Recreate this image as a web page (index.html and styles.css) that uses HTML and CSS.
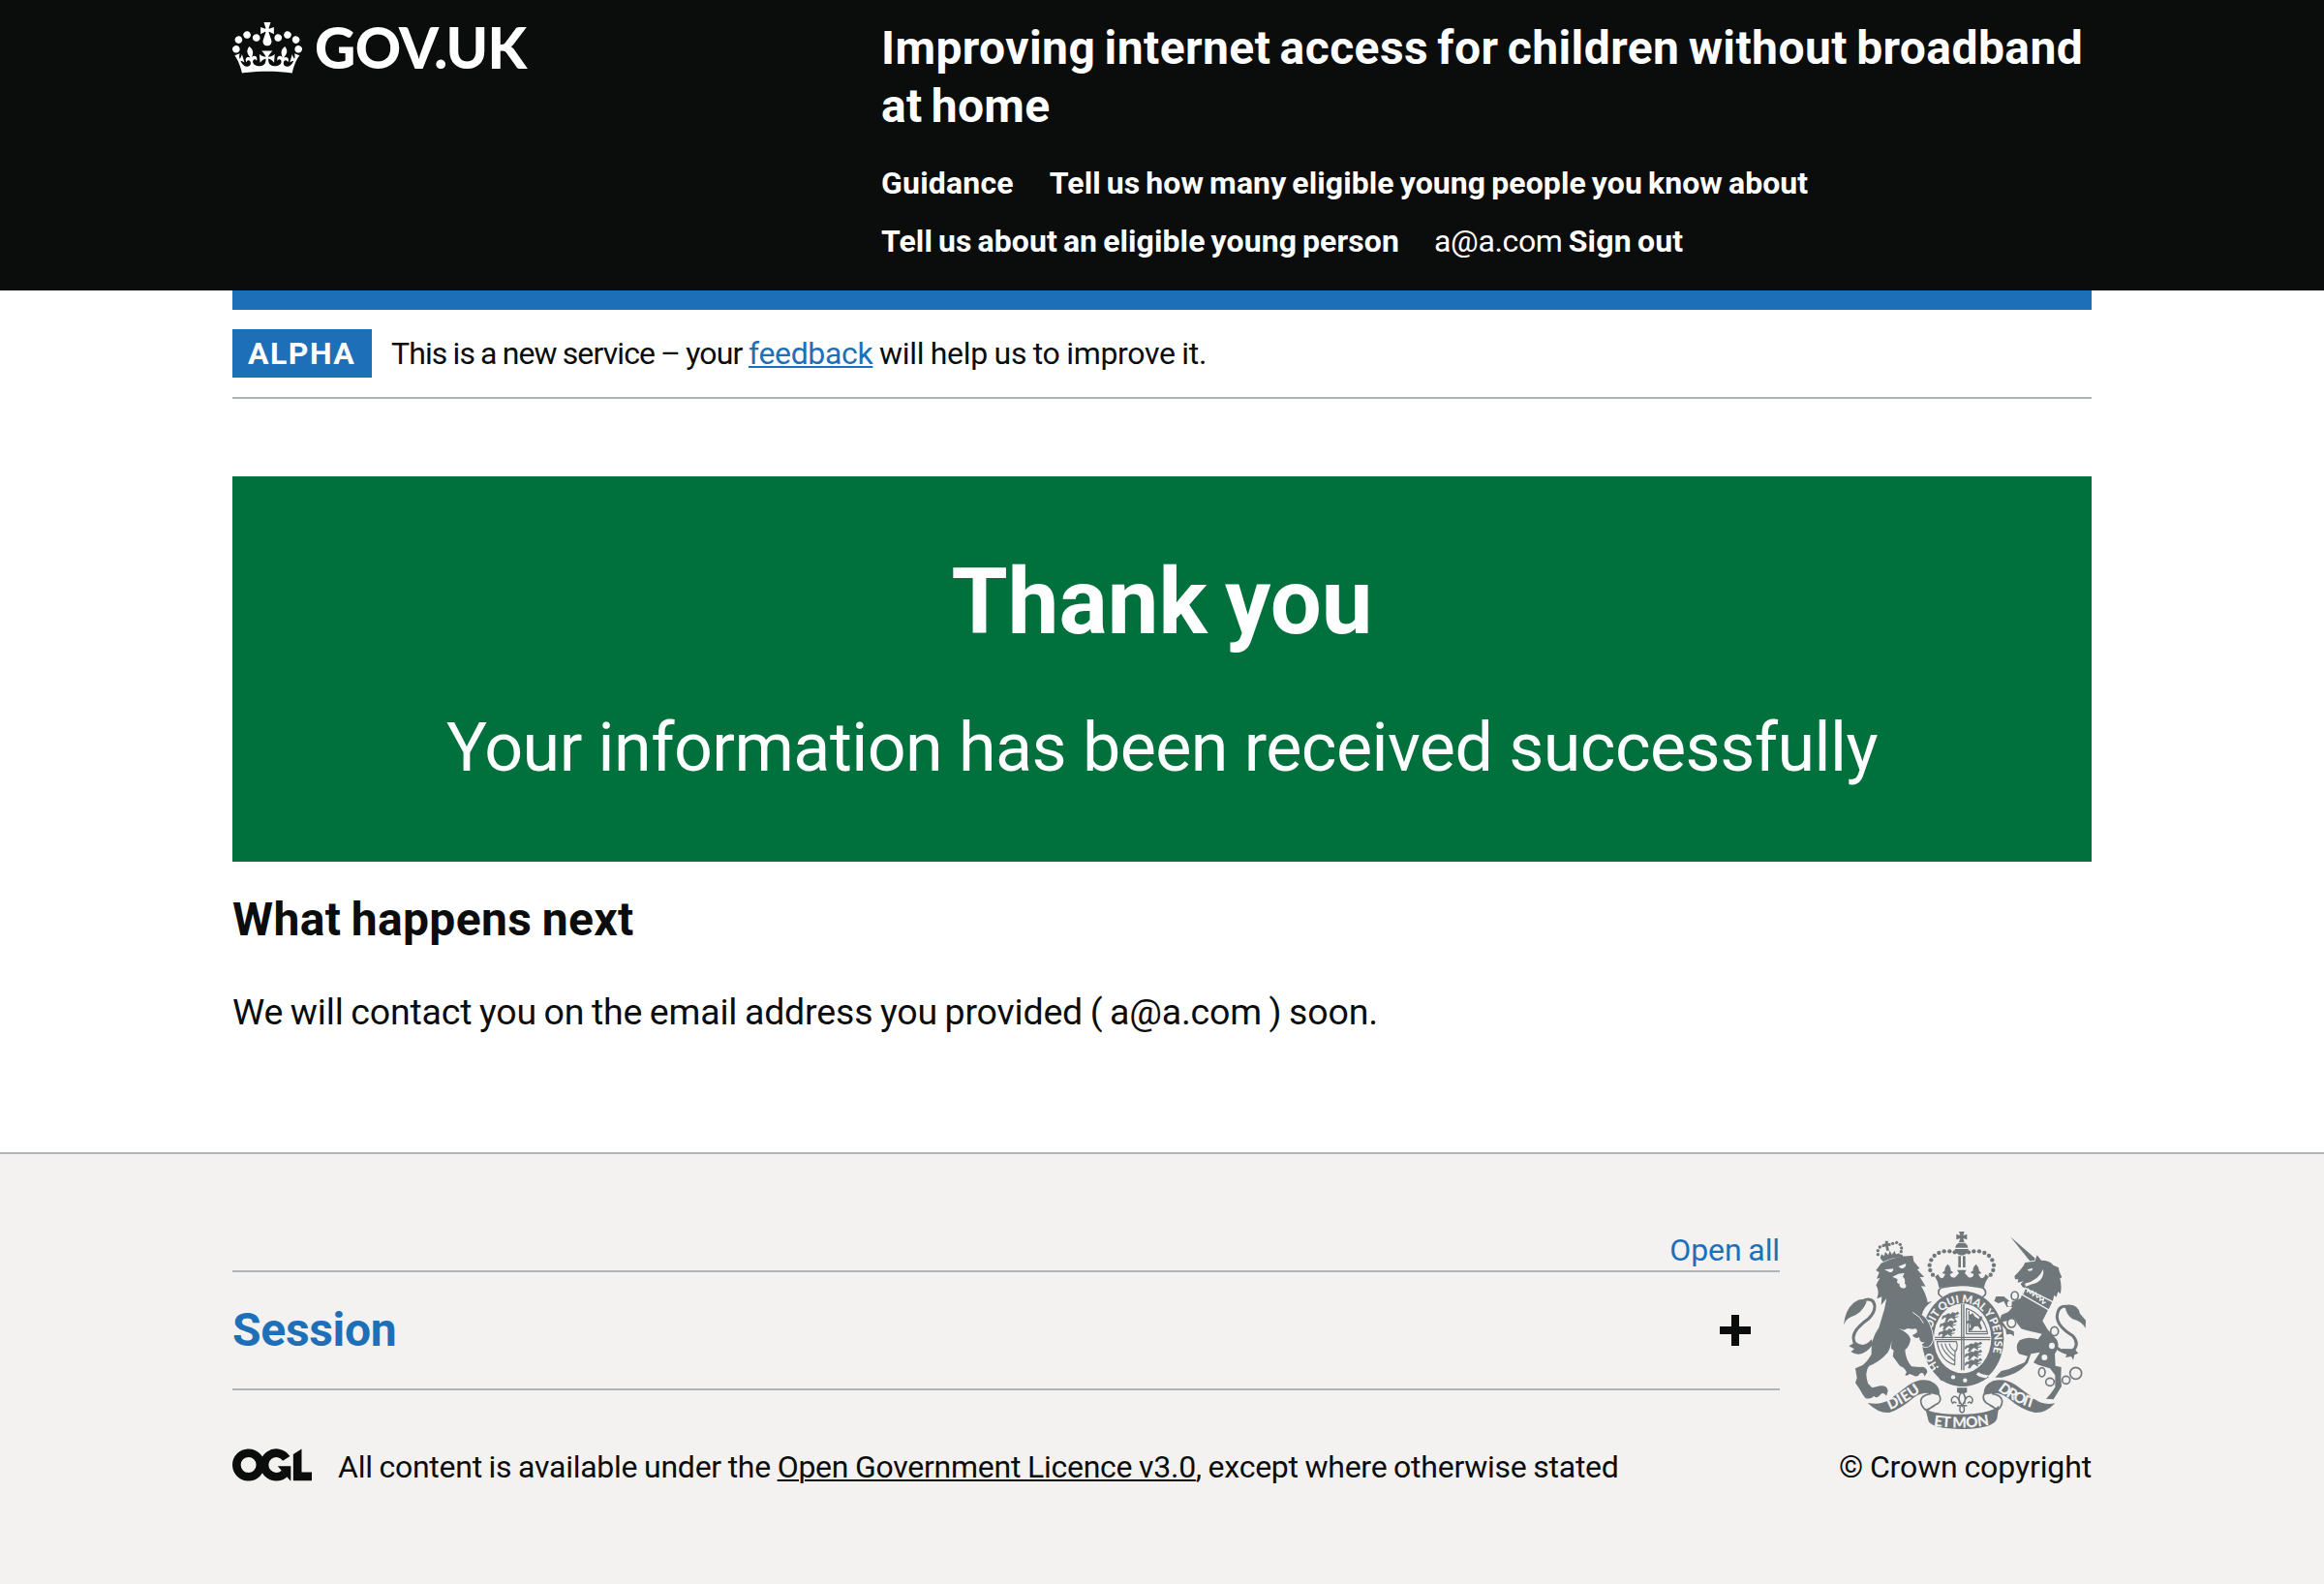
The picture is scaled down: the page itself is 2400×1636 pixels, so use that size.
FILE: index.html
```html
<!DOCTYPE html>
<html lang="en">
<head>
<meta charset="utf-8">
<title>Thank you - GOV.UK</title>
<link rel="stylesheet" href="styles.css">
</head>
<body>
<header class="header">
  <div class="container header-row">
    <a class="logo" href="#">
      <svg class="logo-crown" viewBox="0 0 132 97" aria-hidden="true"><path fill="currentColor" fill-rule="evenodd" d="M25 30.2c3.5 1.5 7.7-.2 9.1-3.7 1.5-3.6-.2-7.8-3.9-9.2-3.6-1.4-7.6.3-9.1 3.9-1.4 3.5.3 7.5 3.9 9zM9 39.5c3.6 1.5 7.8-.2 9.2-3.7 1.5-3.6-.2-7.8-3.9-9.1-3.6-1.5-7.6.2-9.1 3.8-1.4 3.5.3 7.5 3.8 9zM4.4 57.2c3.5 1.5 7.7-.2 9.1-3.8 1.5-3.6-.2-7.7-3.9-9.1-3.5-1.5-7.6.3-9.1 3.8-1.4 3.5.3 7.6 3.9 9.1zm38.3-21.4c3.5 1.5 7.7-.2 9.1-3.8 1.5-3.6-.2-7.7-3.9-9.1-3.6-1.5-7.6.3-9.1 3.8-1.3 3.6.4 7.7 3.9 9.1zm64.4-5.6c-3.6 1.5-7.8-.2-9.1-3.7-1.5-3.6.2-7.8 3.8-9.2 3.6-1.4 7.7.3 9.2 3.9 1.3 3.5-.4 7.5-3.9 9zm15.9 9.3c-3.6 1.5-7.7-.2-9.1-3.7-1.5-3.6.2-7.8 3.7-9.1 3.6-1.5 7.7.2 9.2 3.8 1.5 3.5-.3 7.5-3.8 9zm4.7 17.7c-3.6 1.5-7.8-.2-9.2-3.8-1.5-3.6.2-7.7 3.9-9.1 3.6-1.5 7.7.3 9.2 3.8 1.3 3.5-.4 7.6-3.9 9.1zM89.3 35.8c-3.6 1.5-7.8-.2-9.2-3.8-1.4-3.6.2-7.7 3.9-9.1 3.6-1.5 7.7.3 9.2 3.8 1.4 3.6-.3 7.7-3.9 9.1zM69.7 17.7l8.9 4.7V9.3l-8.9 2.8c-.2-.3-.5-.6-.9-.9L72.4 0H59.6l3.5 11.2c-.3.3-.6.5-.9.9l-8.8-2.8v13.1l8.8-4.7c.3.3.6.7.9.9l-5 15.4v.1c-.2.8-.4 1.6-.4 2.4 0 4.1 3.1 7.5 7 8.1h.2c.3 0 .7.1 1 .1.4 0 .7 0 1-.1h.2c4-.6 7.1-4.1 7.1-8.1 0-.8-.1-1.7-.4-2.4V34l-5.1-15.4c.4-.2.7-.6 1-.9zM66 92.8c16.9 0 32.8 1.1 47.1 3.2 4-16.9 8.9-26.7 14-33.5l-9.6-3.4c1 4.9 1.1 7.2 0 10.2-1.5-1.4-3-4.3-4.2-8.7L108.6 76c2.8-2 5-3.2 7.5-3.3-4.4 9.4-10 11.9-13.6 11.2-4.3-.8-6.3-4.6-5.6-7.9 1-4.7 5.7-5.9 8-.5 4.3-8.7-3-11.4-7.6-8.8 7.1-7.2 7.9-13.5 2.1-21.1-8 6.1-8.1 12.3-4.5 20.8-4.7-5.4-12.1-2.5-9.5 6.2 3.4-5.2 7.9-2 7.2 3.1-.6 4.3-6.4 7.8-13.5 7.2-10.3-.9-10.9-8-11.2-13.8 2.5-.5 7.1 1.8 11 7.3L80.2 60c-4.1 4.4-8 5.3-12.3 5.4 1.4-4.4 8-11.6 8-11.6H55.5s6.4 7.2 7.9 11.6c-4.2-.1-8-1-12.3-5.4l1.4 16.4c3.9-5.5 8.5-7.7 10.9-7.3-.3 5.8-.9 12.8-11.1 13.8-7.2.6-12.9-2.9-13.5-7.2-.7-5 3.8-8.3 7.1-3.1 2.7-8.7-4.6-11.6-9.4-6.2 3.7-8.5 3.6-14.7-4.6-20.8-5.8 7.6-5 13.9 2.2 21.1-4.7-2.6-11.9.1-7.7 8.8 2.3-5.5 7.1-4.2 8.1.5.7 3.3-1.3 7.1-5.7 7.9-3.5.7-9-1.8-13.5-11.2 2.5.1 4.7 1.3 7.5 3.3l-4.7-15.4c-1.2 4.4-2.7 7.2-4.3 8.7-1.1-3-.9-5.3 0-10.2l-9.5 3.4c5 6.9 9.9 16.7 14 33.5 14.8-2.1 30.8-3.2 47.7-3.2z"/></svg>
      <span class="logo-text">GOV.UK</span>
    </a>
    <div class="header-content">
      <a class="service-name" href="#">Improving internet access for children without broadband <span class="service-tail">at home</span></a>
      <nav class="nav">
        <a class="nav-guidance" href="#">Guidance</a>
        <a href="#">Tell us how many eligible young people you know about</a>
        <a href="#">Tell us about an eligible young person</a>
        <span class="account"><span class="email">a@a.com</span> <a class="sign-out" href="#">Sign out</a></span>
      </nav>
    </div>
  </div>
</header>

<div class="container">
  <div class="phase-banner">
    <strong class="tag">ALPHA</strong>
    <span class="phase-text"><span class="phase-lead">This is a new service – your</span> <a class="feedback" href="#">feedback</a> will help us to improve it.</span>
  </div>
  <main class="main">
    <div class="panel">
      <h1 class="panel-title">Thank you</h1>
      <div class="panel-body">Your information has been received successfully</div>
    </div>
    <h2 class="heading">What happens next</h2>
    <p class="body-text">We will contact you on the email address you provided ( a@a.com ) soon.</p>
  </main>
</div>

<footer class="footer">
  <div class="container footer-row">
    <div class="footer-main">
      <button class="open-all" type="button">Open all</button>
      <div class="accordion">
        <h2 class="accordion-title">Session</h2>
        <span class="plus"></span>
      </div>
      <div class="licence">
        <svg class="ogl" viewBox="0 0 484 196" aria-hidden="true">
          <g fill="none" stroke="currentColor" stroke-width="51">
            <circle cx="98" cy="98" r="72.500"/>
            <path d="M329 59A72.500 72.500 0 1 0 318 150"/>
          </g>
          <path fill="currentColor" d="M276 106h80v88h-3l-50-57zM160 72h26v52h-26zM371 33 422 0v143h62v51H371z"/>
        </svg>
        <span class="licence-text">All content is available under the <a href="#">Open Government Licence v3.0</a>, except where otherwise stated</span>
      </div>
    </div>
    <div class="footer-side">
      <svg class="crest" viewBox="60 60 780 630" aria-hidden="true">
        <defs>
          <path id="garter" d="M369 489A99 119 0 1 1 506 494"/>
          <path id="motto-left" d="M215 618Q260 600 318 556"/>
          <path id="motto-right" d="M549 556Q595 598 672 616"/>
          <path id="motto-mid" d="M350 667Q437 681 524 665"/>
          <g id="charge"><path d="M0 6q9-9 17-3l4-6 9 2 2 7-6 3 4 10-5-3-7-4-8 5-5 8-5-1 4-10-6-3-8 6 2-9zM30 1l8-6 4 5-7 3M23 10l8 2 9-3"/></g>
          <g id="pearls"><circle cx="416" cy="130" r="6.500"/><circle cx="400" cy="127" r="6.500"/><circle cx="383" cy="127" r="6.500"/><circle cx="367" cy="132" r="6.500"/><circle cx="353" cy="141" r="6.500"/><circle cx="343" cy="154" r="6.500"/><circle cx="338" cy="170" r="6.500"/><circle cx="340" cy="186" r="6.500"/><circle cx="348" cy="200" r="6.500"/></g>
        </defs>

        <!-- crown -->
        <g class="ink">
          <path d="M429 66h17l-4 12 12-4v17l-12-4 4 12h-17l4-12-12 4V74l12 4zM428 101h19q10 6 10 15h-39q0-9 10-15zM416 120h43q-3 18-21 20-19-2-22-20zM427 142h8v35h-8zM441 142h8v35h-8z"/>
          <use href="#pearls"/><use href="#pearls" transform="matrix(-1 0 0 1 875 0)"/>
          <path d="M354 206l11-8q5 16 15 11l7-11-10-3 8-8q-1-10 9-20 12 9 9 20l9 6-11 5q3 13 16 10l12-13-6-10h29l-5 10 12 13q13 3 16-10l-11-5 9-6q-2-10 9-20 10 10 9 20l8 8-10 3 7 11q10 5 15-11l11 8q-13 15-15 34-67-18-140 0-2-20-12-34z"/>
        </g>
        <path class="line" d="M374 240q-12 8-7 21l10 9M502 240q14 9 8 22l-9 8M374 240q63-16 128 0"/>

        <!-- garter and shield -->
        <ellipse class="ink" cx="441" cy="398" rx="127" ry="148"/>
        <ellipse class="paper" cx="440" cy="397" rx="89" ry="108"/>
        <text class="garter-text"><textPath href="#garter" startOffset="2">HO&emsp;&emsp;SOIT QUI MAL Y PENSE</textPath></text>
        <g class="ink">
          <path d="M435 291h4v205h-4zM442 291h4v205h-4zM354 392h172v4H354zM354 399h172v4H354z"/>
          <g class="charges">
            <use href="#charge" x="387" y="320"/><use href="#charge" x="380" y="345"/><use href="#charge" x="376" y="371"/>
            <use href="#charge" x="458" y="413"/><use href="#charge" x="458" y="438"/><use href="#charge" x="458" y="464"/>
          </g>
          <path d="M460 325l12-6 6 10 12 8 8-10 4 7-8 14 7 17-4 7-9-13-11 1-8 13-11 1 8-15-5-11-10 5 4-12 8 2z"/>
        </g>
        <path class="line thin" d="M452 304v79h66M460 312v64h58M452 304q55 18 66 79M361 407h60q7 18-4 32l-1 40q-45-12-55-72zM374 413q5 28 42 54M386 413q6 24 30 39M399 413q3 14 18 24"/>
        <g class="ink">
          <path d="M357 485q50 50 131 19l34 13q-43 31-91 28-51-5-75-38z"/>
          <path d="M379 480q-20 5-13 19-12 9 1 19 5 15 22 9-15-8-10-20-4-13 10-20z"/>
        </g>
        <path class="paper" d="M489 502q17 11 32 8l-6 9q-16 3-33-10z"/>
        <g class="paper"><circle cx="411" cy="517" r="6.500"/><circle cx="448" cy="527" r="6.500"/></g>

        <!-- lion -->
        <path class="halo ink" d="M172 186 188 164Q235 140 286 141L289 158 307 180 300 184 321 207 308 207 326 236 312 235Q328 262 332 285L346 282Q319 300 314 325 342 342 349 398 343 427 321 423L314 416 324 408Q307 412 306 393 294 401 285 388L299 379Q302 362 285 368L270 366 258 371 243 366Q276 383 279 399 277 421 262 433 264 463 282 484L306 486Q329 482 331 502L322 515Q319 498 307 507 301 520 286 511L276 507Q268 515 262 510L267 502Q260 486 246 482L224 452 227 434 219 428 220 405Q216 435 202 448 182 470 150 483 136 502 147 536L160 550 185 544Q207 542 209 560L204 575Q196 561 186 571 178 585 166 576 154 587 139 582L132 572 118 549 108 535 113 520 108 490 122 484Q139 479 158 446 155 398 181 364L198 307 205 273 188 294 190 268 175 274Q184 250 172 232L184 210 174 212 182 193z"/>
        <g class="ink">
          <path d="M72 356Q76 309 104 286 130 267 143 284 129 320 91 332 79 337 72 356zM88 421 105 430 94 438Q129 462 164 414L158 400Q134 429 109 408z"/>
          <path d="M190 151Q221 132 254 137L256 146Q225 144 194 160zM200 95h10l-1 8 8-2 1 9-8 1 3 14h-9l-2-13-8 2-1-9 8-2z"/>
          <path d="M185 148l4-12 8 6 4-13 9 10 5-14 6 12 9-11 4 12 10-6 2 13q-31 0-54 12z"/>
          <g><circle cx="178" cy="125" r="5"/><circle cx="178" cy="137" r="5"/><circle cx="184" cy="114" r="5"/><circle cx="194" cy="110" r="4"/><circle cx="224" cy="103" r="5"/><circle cx="236" cy="100" r="5"/><circle cx="247" cy="106" r="5"/><circle cx="251" cy="117" r="5"/><circle cx="250" cy="128" r="5"/></g>
        </g>
        <path class="line heavy" d="M127 283Q148 269 163 282 178 307 148 337 103 369 102 394 103 418 120 423"/>
        <path class="paper" d="M198 184l28-3q-2 15-13 10zM241 174l24-9q0 16-15 15zM223 206l18-9 19-3-5 12q9 7 6 20l5 8q-3 12-14 7-9-5-7-14-11 2-6-13z"/>
        <path class="cut" d="M286 316q25 14 33 34"/>

        <!-- unicorn -->
        <path class="ink" d="M588 82 670 153 655 165z"/>
        <path class="halo ink" d="M601 204Q627 179 634 162L664 158 671 139 684 155Q711 155 721 170L737 177 741 192 748 208 742 211Q749 242 743 259L736 252 731 269 724 263 719 284 626 238 620 228 629 220 611 224 613 214 603 214z"/>
        <path class="paper" d="M641 184l17-5-3 8-9 1zM690 182q5 37-34 47l-20 7-3-9q43-10 57-45z"/>
        <path class="ink" d="M620 273 628 252 705 309 688 343 703 368 724 392Q748 412 726 445L728 482 746 486 745 520 747 545 735 565 722 586 699 584 714 567 727 548 727 511 711 490 675 479 660 472 680 440 652 445 642 473Q619 500 587 511L563 518H541L560 498 584 492 633 471 642 452 615 445Q600 424 617 403 642 389 674 400L686 383Q648 376 622 367 609 352 602 335L580 342 564 346 579 367 599 375 600 390 589 383 576 385 574 370 553 347 561 324 582 315 595 300 577 299 568 282 551 288 538 281 544 267 568 267 590 285z"/>
        <g class="collar"><path d="M634 241 720 284 708 309 626 262z"/><path d="M640 255l3-10 7 12 7-6 1 14 9-9 4 14 11-5-2 14 11-5-3 14 10-3"/></g>
        <path class="line heavy" d="M728 423Q763 451 781 437 804 414 782 389 733 359 733 329 736 290 768 300"/>
        <path class="ink" d="M757 294Q796 287 804 320L822 341 821 366Q810 344 781 337 761 324 757 294zM746 429 763 447 759 456 777 453 783 464 787 448 799 443 787 430z"/>
        <g class="chain">
          <ellipse cx="602" cy="265" rx="11" ry="13"/><ellipse cx="592" cy="349" rx="13" ry="14"/><ellipse cx="725" cy="375" rx="12" ry="14"/><ellipse cx="686" cy="502" rx="10" ry="14"/><ellipse cx="711" cy="532" rx="13" ry="12"/><ellipse cx="761" cy="526" rx="12" ry="12"/><circle cx="791" cy="505" r="18"/>
        </g>
        <g class="paper"><ellipse cx="586" cy="290" rx="7" ry="9"/><ellipse cx="717" cy="420" rx="9" ry="10"/><ellipse cx="694" cy="456" rx="9" ry="9"/></g>

        <!-- ribbon -->
        <path class="ink" d="M146 597Q188 605 215 586L271 543Q306 519 340 529 374 545 368 574L343 568Q318 562 291 579 247 617 213 627 180 630 146 597zM727 598Q686 605 661 583L603 540Q570 519 534 529 503 543 506 572L532 568Q555 563 582 583 624 620 664 627 696 630 727 598zM325 614Q347 632 437 632 526 631 553 605L547 646Q535 678 437 678 347 677 335 654z"/>
        <path class="line" d="M343 568Q309 574 311 593 313 611 329 621 347 607 366 597 377 586 366 570M531 568Q562 573 563 592 561 611 548 619 532 606 514 597 500 586 507 569M328 619q12-6 25-13M548 617q-12-6-24-13"/>
        <text class="motto"><textPath href="#motto-left" textLength="112">DIEU</textPath></text>
        <text class="motto"><textPath href="#motto-mid" textLength="174">ET MON</textPath></text>
        <text class="motto"><textPath href="#motto-right" textLength="126">DROIT</textPath></text>
        <path class="ink" d="M423 550h31v14l-10 4h-11l-10-4z"/>
        <path class="line fleur" d="M438 562q-17 20-2 38l3 8 3-8q15-18-4-38M431 600q-2-25-18-23-13 8-3 21 5-8 11 0M446 600q2-25 18-23 13 8 3 21-5-8-11 0M423 605h31M433 608q-4 18 6 19 9-1 5-19"/>
      </svg>
      <a class="copyright" href="#">© Crown copyright</a>
    </div>
  </div>
</footer>
</body>
</html>
```
FILE: styles.css
```css
* { box-sizing: border-box; }
body {
  margin: 0;
  background: #fff;
  color: #0b0c0c;
  font: 32px/40px Roboto, "Liberation Sans", sans-serif;
  word-spacing: -1px;
  font-kerning: normal;
}
a { color: inherit; text-decoration: none; }
h1, h2, p { margin: 0; }
.container { width: 1920px; margin: 0 auto; }

.header { height: 300px; background: #0b0c0c; color: #fff; font-weight: 700; }
.header-row { display: flex; padding-top: 20px; }
.logo { display: flex; width: 670px; height: 60px; }
.logo-crown { display: block; width: 72px; height: 53px; margin-top: 3px; }
.logo-text { margin: -2px 0 0 13px; font: 900 58.5px/60px Lato, sans-serif; letter-spacing: -0.7px; }
.header-content { width: 1250px; }
.service-name { display: block; font-size: 48px; line-height: 60px; word-spacing: -3px; letter-spacing: 0.41px; }
.service-tail { letter-spacing: 0.3px; }
.nav { display: flex; flex-wrap: wrap; column-gap: 37px; margin-top: 19px; line-height: 60px; word-spacing: -2px; letter-spacing: 0.08px; }
.nav-guidance { letter-spacing: 0.2px; }
.email { font-weight: 400; margin-left: -1px; letter-spacing: -0.35px; }
.sign-out { letter-spacing: 0.2px; }

.phase-banner {
  display: flex;
  height: 112px;
  padding: 20px 0;
  border-top: 20px solid #1d70b8;
  border-bottom: 2px solid #b1b4b6;
  line-height: 50px;
}
.tag { width: 144px; height: 50px; padding-left: 16px; background: #1d70b8; color: #fff; letter-spacing: 1.5px; }
.phase-text { margin-left: 20px; letter-spacing: -0.3px; }
.phase-lead { letter-spacing: -0.89px; }
.feedback { color: #1d70b8; letter-spacing: -0.35px; text-decoration: underline 2px; text-underline-offset: 2px; }

.main { height: 778px; padding-top: 80px; }
.panel { height: 398px; padding-top: 80px; background: #00703c; color: #fff; text-align: center; }
.panel-title { font-size: 94px; line-height: 100px; word-spacing: -5px; }
.panel-body { margin-top: 55px; font-size: 70px; line-height: 90px; letter-spacing: -0.55px; word-spacing: 0; }
.heading { margin-top: 36px; font-size: 48px; line-height: 50px; letter-spacing: 0.38px; word-spacing: -2px; }
.panel + .heading { margin-top: 35px; }
.body-text { margin-top: 45px; font-size: 37.5px; line-height: 50px; letter-spacing: -0.18px; word-spacing: -1.5px; }

.footer { height: 446px; border-top: 2px solid #b1b4b6; background: #f3f2f1; }
.footer-row { display: flex; justify-content: space-between; padding-top: 78px; }
.footer-main { display: flex; flex-direction: column; width: 1598px; }
.open-all { align-self: flex-end; height: 42px; padding: 0; border: 0; background: none; color: #1d70b8; font: inherit; word-spacing: inherit; line-height: 42px; letter-spacing: -0.1px; }
.accordion {
  display: flex;
  align-items: center;
  justify-content: space-between;
  height: 124px;
  padding-right: 30px;
  border-top: 2px solid #b1b4b6;
  border-bottom: 2px solid #b1b4b6;
}
.accordion-title { color: #1d70b8; font-size: 48px; line-height: 60px; letter-spacing: -0.3px; }
.plus { width: 32px; height: 32px; background: linear-gradient(#0b0c0c, #0b0c0c) center / 32px 8px no-repeat, linear-gradient(#0b0c0c, #0b0c0c) center / 8px 32px no-repeat; }
.licence { display: flex; align-items: flex-start; margin-top: 59px; letter-spacing: -0.25px; }
.ogl { width: 82px; height: 34px; margin: 1px 27px 0 0; }
.licence-text a { text-decoration: underline 2px; text-underline-offset: 2px; }
.footer-side { display: flex; flex-direction: column; align-items: flex-end; width: 262px; }
.crest { width: 260px; height: 210px; }
.copyright { margin-top: 15px; white-space: nowrap; letter-spacing: -0.12px; }

.ink { fill: #6f777b; }
.paper { fill: #f3f2f1; }
.halo { stroke: #f3f2f1; stroke-width: 5px; paint-order: stroke; }
.line { fill: none; stroke: #6f777b; stroke-width: 5px; stroke-linejoin: round; }
.thin { stroke-width: 3.5px; }
.heavy { stroke-width: 9px; }
.fleur { stroke-width: 4.5px; }
.cut { fill: none; stroke: #f3f2f1; stroke-width: 3px; }
.charges { stroke: #6f777b; stroke-width: 2.5px; }
.collar { fill: #6f777b; stroke: #f3f2f1; stroke-width: 4px; }
.chain { fill: #f3f2f1; stroke: #6f777b; stroke-width: 5px; }
.garter-text, .motto { fill: #f3f2f1; font: 900 34px Lato, sans-serif; word-spacing: -2px; letter-spacing: 0; }
.motto { font-size: 46px; }
```
